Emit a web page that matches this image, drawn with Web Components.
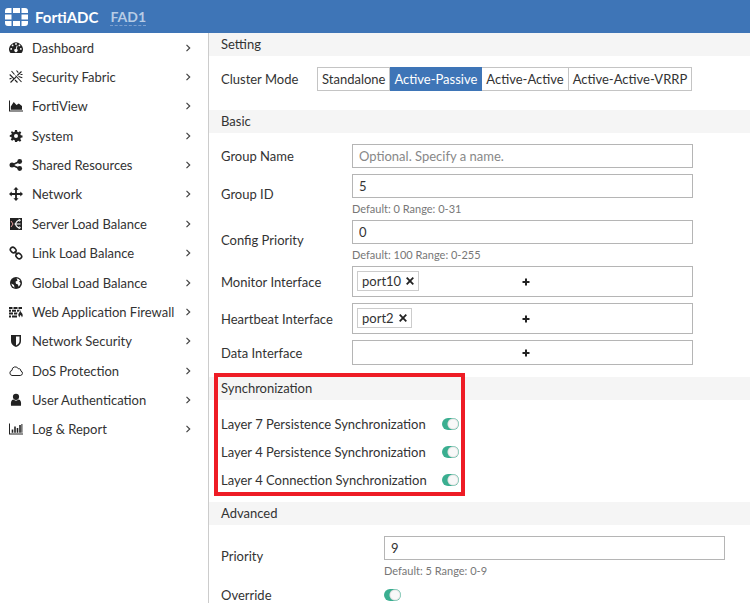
<!DOCTYPE html>
<html lang="en">
<head>
<meta charset="utf-8">
<meta name="viewport" content="width=device-width, initial-scale=1">
<title>FortiADC</title>
<style>
  html, body { margin: 0; height: 100%; }
  body { overflow: hidden; background: #fff; color: #333; font: 13px/18px Lato, "Liberation Sans", sans-serif; }
</style>
</head>
<body>
<adc-app></adc-app>
<script>
const ICONS = {
  gauge: '<path fill-rule="evenodd" d="M1 11.6A7 6.600 0 1 1 13 11.600Q12.800 12 12.300 12H1.700Q1.200 12 1 11.600ZM2.200 7a.9.9 0 1 0 0 1.800.9.9 0 0 0 0-1.800ZM3.600 3.500a.9.9 0 1 0 0 1.800.9.9 0 0 0 0-1.800ZM7 2.100a.9.9 0 1 0 0 1.800.9.9 0 0 0 0-1.800ZM10.400 3.500a.9.9 0 1 0 0 1.800.9.9 0 0 0 0-1.800ZM11.800 7a.9.9 0 1 0 0 1.800.9.9 0 0 0 0-1.800ZM8.600 4.800l-.9 3.300a1.600 1.600 0 1 1-.9-.2l.9-3.300Z"/>',
  fabric: '<g fill="none" stroke="currentColor" stroke-width="1.100"><path d="M2.500 1l3 3.500M6.500 5.500L12.500 12M.7 4.500l4 4M12.500 1.500l-4.200 4M7 7l-5.500 5.500M7.500.500l1.800 2.200M9.500 6.500l3.800 1.300M6 10l2.500 2.500M.500 9l2-.8M11.500 4.500h2"/></g>',
  area: '<path d="M0 1.500h1v10h13v1H0ZM1.800 10.700V7.500L4.700 3l2.800 3L9.800 4.500l3.200 2.500V10.700Z"/>',
  gear: '<path fill-rule="evenodd" d="M6 1h2l.3 1.700 1.100.5 1.500-1 1.400 1.400-1 1.500.5 1.100 1.700.3v2l-1.700.3-.5 1.100 1 1.500-1.400 1.400-1.500-1-1.100.5L8 13H6l-.3-1.700-1.100-.5-1.500 1-1.400-1.400 1-1.500-.5-1.100L.800 8V6l1.500-.3.5-1.100-1-1.500L3.100 2.200l1.500 1 1.100-.5ZM7 5a2 2 0 1 0 0 4A2 2 0 0 0 7 5Z"/>',
  share: '<circle cx="3" cy="7" r="2.500"/><circle cx="10.700" cy="3.500" r="2.400"/><circle cx="10.700" cy="10.500" r="2.400"/><path fill="none" stroke="currentColor" stroke-width="1.700" d="M10.500 3.500L3 7l7.500 3.500"/>',
  move: '<path d="M7 0L9.600 2.700H7.900v3.400h3.400V4.400L14 7l-2.700 2.600V7.900H7.900v3.400h1.700L7 14 4.400 11.300h1.700V7.900H2.700v1.700L0 7l2.700-2.600v1.700h3.400V2.700H4.400Z"/>',
  server: '<path d="M1 1h12v12H1Z"/><g fill="none" stroke="#fff"><path stroke-width="1.100" d="M5.500 7h6M6.500 7Q7.500 3.500 11 3M6.500 7Q7.500 10.500 11 11"/><path d="M9.500 2.200l2 .8-1 1.700M9.500 11.800l2-.8-1-1.700" stroke-width=".8"/></g><path fill="none" stroke="#e59a9a" d="M2 4l2 3-2 3"/>',
  link: '<g fill="none" stroke="currentColor" stroke-width="1.600"><rect x="1.200" y="1.600" width="6" height="4.800" rx="2.400" transform="rotate(45 4.200 4)"/><rect x="6.800" y="7.600" width="6" height="4.800" rx="2.400" transform="rotate(45 9.800 10)"/><path d="M5.500 5.500l3 3"/></g>',
  globe: '<circle cx="7" cy="7" r="6"/><path fill="#fff" d="M7.500 2.300Q10 2.500 11.300 4.700L10 5.500 11.600 7Q11.300 9.500 9.500 10.800L9 8.500 7 7.700 6.500 5.800 8.500 4.500ZM2.300 7.500L5 9l.5 2.700Q2.800 10.700 2.300 7.500Z"/>',
  wall: '<path d="M0 2h3.500v2H0ZM4.500 2h4v2h-4ZM9.500 2H13v2H9.500ZM0 4.800h2v2H0ZM3 4.800h4v2H3ZM8 4.800h3L9.500 6.800H8ZM0 7.600h4v2H0ZM5 7.600h3.500L8 9.600H5ZM0 10.400h2v2H0ZM3 10.400h5v2H3Z"/><path d="M11.200 5q.2 2 1.800 3.200 1.500 2.300-.2 4.300.2-1.500-1.400-2.600-1 1-.5 2.600-2.400-1.500-1.200-4Q10.900 7 11.200 5Z"/>',
  shield: '<path fill-rule="evenodd" d="M2 1h10v6q0 4-5 6Q2 11 2 7ZM7 2.500v9q3.500-2 3.500-4.500V2.500Z"/>',
  cloud: '<path fill="none" stroke="currentColor" d="M3 11.500h8.200a2.300 2.300 0 0 0 .6-4.500 1.900 1.900 0 0 0-2.500-2.200A3.300 3.300 0 0 0 3 6.400 2.600 2.600 0 0 0 3 11.500Z"/>',
  user: '<circle cx="7" cy="3.800" r="3.100"/><path d="M2 12.800q-.6-6 2.400-6.200Q7 8.700 9.600 6.600 12.600 6.800 12 12.800Z"/>',
  bars: '<path d="M0 1.500h1v10h13v1H0ZM2.700 7.500h1.600v3.200H2.700ZM5.200 4.500h1.600v6.200H5.200ZM7.700 6h1.600v4.700H7.700ZM10.200 3h1.600v7.700h-1.600ZM12.400 2h1v8.700h-1Z"/>'
};

function define(name, render) {
  customElements.define(name, class extends HTMLElement {
    connectedCallback() {
      if (this.shadowRoot) return;
      this.attachShadow({ mode: 'open' }).innerHTML = render(this);
    }
  });
}
const attr = (el, name) => el.getAttribute(name) || '';

define('adc-icon', el => `
  <style>:host { display: block; width: 14px; height: 14px; color: #222; } svg { display: block; }</style>
  <svg width="14" height="14" viewBox="0 0 14 14" fill="currentColor" aria-hidden="true">${ICONS[attr(el, 'name')]}</svg>`);

define('adc-header', () => `
  <style>
    :host { display: flex; align-items: center; height: 33px; padding: 0 5px; background: #3e75b7; color: #fff; }
    svg { margin-right: 7px; }
    strong { font-size: 15px; line-height: 24px; font-weight: 700; }
    a { margin: 2px 0 0 12px; font-size: 14px; line-height: 16px; font-weight: 700; color: #b7cce5; text-decoration: none; border-bottom: 1px dashed #7c9fce; }
  </style>
  <svg width="23" height="18" viewBox="0 0 23 18" fill="#fff" aria-hidden="true">
    <path d="M8 0h7v5H8ZM8 13h7v5H8ZM0 6.500h6.500v5H0ZM16.500 6.500H23v5h-6.500ZM3 0h3.500v5H0V3Q0 0 3 0ZM16.500 0H20q3 0 3 3v2h-6.500ZM0 13h6.500v5H3Q0 18 0 15ZM16.500 13H23v2q0 3-3 3h-3.500Z"/>
  </svg>
  <strong>FortiADC</strong><a href="#">FAD1</a>`);

define('adc-nav-item', el => `
  <style>
    :host { display: flex; }
    a { flex: 1; display: flex; align-items: center; padding: 0 17px 0 9px; color: inherit; text-decoration: none; }
    adc-icon { margin-right: 9px; }
    span { flex: 1; white-space: nowrap; }
    .chevron { display: block; }
  </style>
  <a href="#"><adc-icon name="${attr(el, 'icon')}"></adc-icon><span><slot></slot></span>
  <svg class="chevron" width="6" height="8" viewBox="0 0 6 8" fill="none" stroke="#444" stroke-width="1.200" aria-hidden="true"><path d="M1.500 .8L4.700 4 1.500 7.200"/></svg></a>`);

define('adc-nav', () => `
  <style>
    :host { display: block; border-right: 1px solid #ccc; }
    nav { display: grid; grid-auto-rows: 1fr; min-height: 411px; }
  </style>
  <nav aria-label="Main">
    <adc-nav-item icon="gauge">Dashboard</adc-nav-item>
    <adc-nav-item icon="fabric">Security Fabric</adc-nav-item>
    <adc-nav-item icon="area">FortiView</adc-nav-item>
    <adc-nav-item icon="gear">System</adc-nav-item>
    <adc-nav-item icon="share">Shared Resources</adc-nav-item>
    <adc-nav-item icon="move">Network</adc-nav-item>
    <adc-nav-item icon="server">Server Load Balance</adc-nav-item>
    <adc-nav-item icon="link">Link Load Balance</adc-nav-item>
    <adc-nav-item icon="globe">Global Load Balance</adc-nav-item>
    <adc-nav-item icon="wall">Web Application Firewall</adc-nav-item>
    <adc-nav-item icon="shield">Network Security</adc-nav-item>
    <adc-nav-item icon="cloud">DoS Protection</adc-nav-item>
    <adc-nav-item icon="user">User Authentication</adc-nav-item>
    <adc-nav-item icon="bars">Log &amp; Report</adc-nav-item>
  </nav>`);

define('adc-section', el => `
  <style>
    :host { display: block; position: relative; }
    h2 { margin: 0; padding: 0 12px; font-size: inherit; font-weight: 400; line-height: 23px; background: #f5f5f5; }
    .body { display: grid; gap: 6px; padding: 11px 12px 12px; }
    :host([tight]) .body { gap: 0; padding: 10px 12px 8px; }
    :host([roomy]) .body { padding-bottom: 19px; }
    :host([highlight])::after { content: ""; position: absolute; left: 5px; top: -4px; bottom: 6px; width: 243px; border: 4px solid #ee1c25; pointer-events: none; }
  </style>
  <section><h2>${attr(el, 'heading')}</h2><div class="body"><slot></slot></div></section>`);

const ROW = `
  :host { display: grid; grid-template-columns: var(--label, 131px) minmax(0, 341px); align-items: center; }
  .name { white-space: nowrap; }`;

define('adc-field', el => `
  <style>${ROW}
    input { display: block; box-sizing: border-box; width: 100%; height: 24px; padding: 0 6px; border: 1px solid #b5b5b5; background: #fff; color: inherit; font: inherit; outline: 0; }
    input::placeholder { color: #888; opacity: 1; }
    small { display: block; font-size: 11px; line-height: 16px; padding-top: 3px; margin-bottom: -3px; color: #777; }
  </style>
  <label class="name" for="f">${attr(el, 'label')}</label>
  <div><input id="f" type="text" value="${attr(el, 'value')}" placeholder="${attr(el, 'placeholder')}">${el.hasAttribute('hint') ? `<small>${attr(el, 'hint')}</small>` : ''}</div>`);

define('adc-ports', el => `
  <style>${ROW}
    .box { display: grid; box-sizing: border-box; min-height: 25px; border: 1px solid #b5b5b5; }
    .box > * { grid-area: 1 / 1; }
    button { border: 0; padding: 0; background: none; color: #222; font: inherit; }
    .add { display: grid; place-items: center; padding-left: 6px; }
    .tag { justify-self: start; align-self: start; z-index: 1; display: flex; align-items: center; gap: 5px; margin: 4px 4px 5px; padding: 0 4px; border: 1px solid #ccc; background: #fff; }
    svg { display: block; }
  </style>
  <span class="name" id="l">${attr(el, 'label')}</span>
  <div class="box" role="group" aria-labelledby="l">
    <button class="add" type="button" aria-label="Add interface"><svg width="8" height="8" viewBox="0 0 8 8" stroke="#222" stroke-width="2"><path d="M4 .5v7M.5 4h7"/></svg></button>
    ${el.hasAttribute('port') ? `<span class="tag">${attr(el, 'port')}<button type="button" aria-label="Remove ${attr(el, 'port')}"><svg width="8" height="8" viewBox="0 0 8 8" stroke="#222" stroke-width="1.800"><path d="M.7.7l6.600 6.600M7.300.7L.7 7.300"/></svg></button></span>` : ''}
  </div>`);

define('adc-toggle', el => `
  <style>${ROW}
    :host { min-height: var(--toggle-row, 28px); }
    input { appearance: none; display: block; margin: 0; width: 17px; height: 12px; border-radius: 6px; background: radial-gradient(circle at 11px 6px, #f8f8f8 0 4px, #e2e2e2 5px, #3aae90 6px); }
  </style>
  <label class="name" for="t">${attr(el, 'label')}</label><input id="t" type="checkbox" role="switch" checked>`);

define('adc-modes', () => `
  <style>
    :host { display: grid; grid-template-columns: 96px auto; align-items: center; justify-content: start; }
    .set { display: flex; }
    button { box-sizing: border-box; height: 24px; padding: 0 4px; margin: 0; border: 1px solid #c4c4c4; background: #fff; color: inherit; font: inherit; line-height: 20px; white-space: nowrap; }
    button + button { border-left: 0; }
    button[aria-pressed="true"] { background: #3e75b7; border-color: #3e75b7; color: #fff; }
  </style>
  <span id="m">Cluster Mode</span>
  <div class="set" role="group" aria-labelledby="m">
    <button type="button" aria-pressed="false">Standalone</button><button type="button" aria-pressed="true">Active-Passive</button><button type="button" aria-pressed="false">Active-Active</button><button type="button" aria-pressed="false">Active-Active-VRRP</button>
  </div>`);

define('adc-app', () => `
  <style>
    :host { display: grid; grid-template: auto minmax(0, 1fr) / 209px minmax(0, 1fr); height: 100%; overflow: hidden; }
    adc-header { grid-column: 1 / -1; }
    .sync { --label: 221px; }
    .advanced { --label: 163px; --toggle-row: 26px; }
  </style>
  <adc-header></adc-header>
  <adc-nav></adc-nav>
  <main>
    <adc-section heading="Setting" roomy><adc-modes></adc-modes></adc-section>
    <adc-section heading="Basic">
      <adc-field label="Group Name" placeholder="Optional. Specify a name."></adc-field>
      <adc-field label="Group ID" value="5" hint="Default: 0 Range: 0-31"></adc-field>
      <adc-field label="Config Priority" value="0" hint="Default: 100 Range: 0-255"></adc-field>
      <adc-ports label="Monitor Interface" port="port10"></adc-ports>
      <adc-ports label="Heartbeat Interface" port="port2"></adc-ports>
      <adc-ports label="Data Interface"></adc-ports>
    </adc-section>
    <adc-section class="sync" heading="Synchronization" tight highlight>
      <adc-toggle label="Layer 7 Persistence Synchronization"></adc-toggle>
      <adc-toggle label="Layer 4 Persistence Synchronization"></adc-toggle>
      <adc-toggle label="Layer 4 Connection Synchronization"></adc-toggle>
    </adc-section>
    <adc-section class="advanced" heading="Advanced">
      <adc-field label="Priority" value="9" hint="Default: 5 Range: 0-9"></adc-field>
      <adc-toggle label="Override"></adc-toggle>
    </adc-section>
  </main>`);
</script>
</body>
</html>
